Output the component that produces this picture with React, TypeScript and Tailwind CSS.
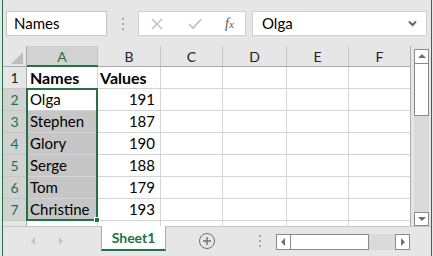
import React from 'react';

const cols = [
  { key: 'A', w: 'w-[71px]' },
  { key: 'B', w: 'w-[63px]' },
  { key: 'C', w: 'w-[62px]' },
  { key: 'D', w: 'w-[64px]' },
  { key: 'E', w: 'w-[62px]' },
  { key: 'F', w: 'w-[61px]' },
];

const rows = [
  { n: 1, name: 'Names', value: 'Values', head: true },
  { n: 2, name: 'Olga', value: '191' },
  { n: 3, name: 'Stephen', value: '187' },
  { n: 4, name: 'Glory', value: '190' },
  { n: 5, name: 'Serge', value: '188' },
  { n: 6, name: 'Tom', value: '179' },
  { n: 7, name: 'Christine', value: '193' },
];

const Dots = () => (
  <div className="flex flex-col gap-[3px]">
    <span className="block w-[2px] h-[2px] bg-[#a6a6a6]" />
    <span className="block w-[2px] h-[2px] bg-[#a6a6a6]" />
    <span className="block w-[2px] h-[2px] bg-[#a6a6a6]" />
  </div>
);

const Tri = ({ dir }: { dir: 'up' | 'down' | 'left' | 'right' }) => {
  const pts = {
    up: '1,6 5,2 9,6',
    down: '1,3 5,7 9,3',
    left: '6,1 2,5 6,9',
    right: '3,1 7,5 3,9',
  }[dir];
  return (
    <svg width="10" height="10" viewBox="0 0 10 10">
      <polygon points={pts} fill="#6e6e6e" />
    </svg>
  );
};

export default function App() {
  return (
    <div className="w-[433px] h-[256px] bg-[#e6e6e6] pl-[2px] pr-[1px] overflow-hidden font-['Lato',sans-serif] text-black">
      <div className="h-full border-x border-[#217346] flex flex-col">
        {/* formula bar */}
        <div className="h-[46px] flex items-start pt-[11px] shrink-0">
          <div className="ml-[3px] w-[101px] h-[25px] bg-white border border-[#c6c6c6] flex items-center pl-[7px] text-[15px]">
            Names
          </div>
          <div className="w-[31px] h-[25px] flex items-center justify-center">
            <Dots />
          </div>
          <div className="w-[108px] h-[25px] bg-white border border-[#d0d0d0] flex items-center">
            <svg className="ml-[12px]" width="12" height="12" viewBox="0 0 12 12">
              <path d="M1 1 L11 11 M11 1 L1 11" stroke="#bdbdbd" strokeWidth="1.4" />
            </svg>
            <svg className="ml-[25px]" width="14" height="12" viewBox="0 0 14 12">
              <path d="M1 6 L5 10 L13 1.5" stroke="#bdbdbd" strokeWidth="1.6" fill="none" />
            </svg>
            <span className="ml-[23px] font-['Liberation_Serif',serif] italic text-[#555] text-[14px] leading-none">
              f<span className="text-[11px]">x</span>
            </span>
          </div>
          <div className="ml-[6px] w-[175px] h-[25px] bg-white border border-[#d0d0d0] flex items-center pl-[9px] text-[15px]">
            <span className="flex-1">Olga</span>
            <svg className="mr-[9px]" width="9" height="7" viewBox="0 0 9 7">
              <path d="M1 1.5 L4.5 5 L8 1.5" stroke="#666" strokeWidth="2" fill="none" />
            </svg>
          </div>
        </div>

        {/* sheet */}
        <div className="h-[180px] flex shrink-0 overflow-hidden">
          <div className="relative w-[408px] border-r border-[#ababab] bg-white overflow-hidden">
            {/* column headers */}
            <div className="flex h-[21px] bg-[#e6e6e6] border-b border-[#ababab]">
              <div className="w-[24px] border-r border-[#ababab] flex items-end justify-end pr-[3px] pb-[2px]">
                <svg width="12" height="12" viewBox="0 0 12 12">
                  <polygon points="12,0 12,12 0,12" fill="#bebebe" />
                </svg>
              </div>
              {cols.map((c) =>
                c.key === 'A' ? (
                  <div
                    key={c.key}
                    className={`${c.w} relative border-r border-[#c6c6c6] bg-[#d2d2d2] flex items-center justify-center text-[14px] text-[#217346]`}
                  >
                    {c.key}
                    <span className="absolute left-0 right-[-1px] bottom-[-1px] h-[2px] bg-[#217346]" />
                  </div>
                ) : (
                  <div
                    key={c.key}
                    className={`${c.w} ${c.key === 'F' ? '' : 'border-r border-[#c6c6c6]'} flex items-center justify-center text-[14px] text-[#222]`}
                  >
                    {c.key}
                  </div>
                )
              )}
            </div>

            {/* rows */}
            {rows.map((r) => {
              const sel = r.n >= 2;
              return (
                <div key={r.n} className="flex h-[22px]">
                  <div
                    className={`w-[24px] border-r border-b border-[#c6c6c6] flex items-center justify-center text-[14px] ${
                      sel ? 'bg-[#d2d2d2] text-[#217346] border-r-[#ababab]' : 'bg-[#e6e6e6] text-[#222] border-r-[#ababab]'
                    }`}
                  >
                    {r.n}
                  </div>
                  <div
                    className={`w-[71px] border-r border-b border-[#d4d4d4] flex items-center pl-[3px] whitespace-nowrap ${
                      r.head ? 'font-bold text-[16px]' : 'text-[15px]'
                    } ${sel && r.n > 2 ? 'bg-[#c6c6c6]' : ''}`}
                  >
                    {r.name}
                  </div>
                  <div
                    className={`w-[63px] border-r border-b border-[#d4d4d4] flex items-center ${
                      r.head ? 'font-bold text-[16px] pl-[2px]' : 'text-[15px] justify-end pr-[5px]'
                    }`}
                  >
                    {r.value}
                  </div>
                  <div className="w-[62px] border-r border-b border-[#d4d4d4]" />
                  <div className="w-[64px] border-r border-b border-[#d4d4d4]" />
                  <div className="w-[62px] border-r border-b border-[#d4d4d4]" />
                  <div className="w-[61px] border-b border-[#d4d4d4]" />
                </div>
              );
            })}
            <div className="flex h-[8px]">
              <div className="w-[24px] border-r border-[#ababab] bg-[#e6e6e6]" />
              <div className="w-[71px] border-r border-[#d4d4d4]" />
              <div className="w-[63px] border-r border-[#d4d4d4]" />
              <div className="w-[62px] border-r border-[#d4d4d4]" />
              <div className="w-[64px] border-r border-[#d4d4d4]" />
              <div className="w-[62px] border-r border-[#d4d4d4]" />
            </div>

            {/* selection A2:A7 */}
            <div className="absolute left-[23px] top-[42px] w-[72px] h-[133px] border-2 border-[#217346]" />
            <div className="absolute left-[91px] top-[171px] w-[6px] h-[6px] bg-[#217346] border border-white" />
          </div>

          {/* vertical scrollbar */}
          <div className="w-[20px] pl-[3px] pt-[3px] flex flex-col">
            <div className="w-[15px] h-[15px] border border-[#8a8a8a] bg-white flex items-center justify-center">
              <Tri dir="up" />
            </div>
            <div className="w-[15px] h-[52px] border border-t-0 border-[#8a8a8a] bg-white" />
            <div className="w-[15px] flex-1 bg-[#dadada]" />
            <div className="w-[15px] h-[14px] border border-[#8a8a8a] bg-white flex items-center justify-center">
              <Tri dir="down" />
            </div>
          </div>
        </div>

        {/* tab bar */}
        <div className="h-[30px] border-t border-[#c6c6c6] flex items-start shrink-0">
          <div className="w-[98px] h-[28px] flex items-center">
            <svg className="ml-[25px]" width="10" height="10" viewBox="0 0 10 10">
              <polygon points="7,1 3,5 7,9" fill="#c4c4c4" />
            </svg>
            <svg className="ml-[18px]" width="10" height="10" viewBox="0 0 10 10">
              <polygon points="3,1 7,5 3,9" fill="#c4c4c4" />
            </svg>
          </div>
          <div className="-mt-px w-[65px] h-[25px] bg-white border-x border-[#ababab] border-b-2 border-b-[#217346] flex items-center justify-center text-[14px] font-bold text-[#217346]">
            Sheet1
          </div>
          <div className="ml-[33px] mt-[6px] w-[16px] h-[16px] rounded-full border border-[#6f6f6f] flex items-center justify-center">
            <svg width="10" height="10" viewBox="0 0 10 10">
              <path d="M5 1 V9 M1 5 H9" stroke="#6f6f6f" strokeWidth="1.4" />
            </svg>
          </div>
          <div className="ml-[44px] mt-[8px]">
            <Dots />
          </div>
          <div className="ml-[15px] mt-[7px] flex h-[16px]">
            <div className="w-[15px] h-[16px] border border-[#8a8a8a] bg-white flex items-center justify-center">
              <Tri dir="left" />
            </div>
            <div className="w-[78px] h-[16px] border border-l-0 border-[#8a8a8a] bg-white" />
            <div className="w-[26px] h-[16px] bg-[#dadada]" />
            <div className="w-[15px] h-[16px] border border-[#8a8a8a] bg-white flex items-center justify-center">
              <Tri dir="right" />
            </div>
          </div>
        </div>
      </div>
    </div>
  );
}
